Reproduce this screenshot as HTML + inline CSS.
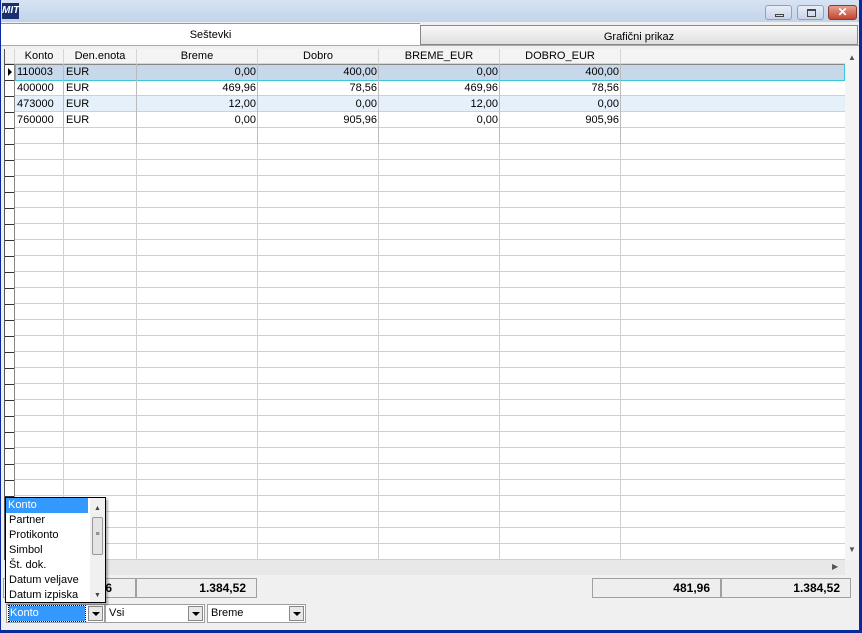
<!DOCTYPE html>
<html><head><meta charset="utf-8"><style>
*{margin:0;padding:0;box-sizing:border-box}
body{width:862px;height:633px;overflow:hidden;background:#0a2a9c;font-family:"Liberation Sans",sans-serif;font-size:11px;position:relative}
.win{position:absolute;left:1px;top:0;width:858px;height:630px;background:#f0f0f0}
.title{position:absolute;left:0;top:0;width:858px;height:22px;background:linear-gradient(#d6e3f3,#c3d4ea)}
.abs{position:absolute}
.tab{position:absolute;top:23px;height:22px;text-align:center;line-height:22px;font-size:11px;color:#000}
.grid{position:absolute;left:3px;top:49px;width:841px;height:511px;background:#fff;border-left:1px solid #555;overflow:hidden}
.rows{position:absolute;left:10px;top:15px;width:831px;height:500px;background:repeating-linear-gradient(#fff 0 15px,#d0d0d0 15px 16px)}
.vl{position:absolute;top:0;width:1px;height:511px;background:#d0d0d0}
.hdr{position:absolute;top:0;height:15px;line-height:15px;text-align:center;background:#f4f4f4;border-right:1px solid #d5d5d5;border-bottom:1px solid #d5d5d5}
.c{position:absolute;height:15px;line-height:15px;white-space:nowrap}
.r{text-align:right;padding-right:2px}
.tot{position:absolute;top:578px;height:20px;background:#eeeeee;border:1px solid #a0a0a0;font-weight:bold;font-size:12px;text-align:right;padding-right:10px;line-height:19px}
.combo{position:absolute;top:604px;height:19px;background:#fff;border:1px solid #a0a0a0;line-height:17px;padding-left:3px}
.btn{position:absolute;right:1px;top:1px;width:15px;height:15px;background:#e8e8e8;border:1px solid #888}
.btn:after{content:"";position:absolute;left:3px;top:5px;border-left:4px solid transparent;border-right:4px solid transparent;border-top:4px solid #000}
</style></head><body>
<div class="win">
<div class="title"></div>
<div class="abs" style="left:1px;top:3px;width:17px;height:16px;background:#1a2f6e;color:#fff;font-weight:bold;font-size:10px;line-height:16px;font-style:italic">MIT</div>
<div class="abs" style="left:764px;top:5px;width:27px;height:15px;border:1px solid #8ea2c0;border-radius:3px;background:linear-gradient(#e8eef8,#c8d4e8)"><div class="abs" style="left:9px;top:8px;width:9px;height:3px;border:1px solid #444"></div></div>
<div class="abs" style="left:796px;top:5px;width:27px;height:15px;border:1px solid #8ea2c0;border-radius:3px;background:linear-gradient(#e8eef8,#c8d4e8)"><div class="abs" style="left:9px;top:3px;width:9px;height:8px;border:1px solid #444;border-top-width:2px"></div></div>
<div class="abs" style="left:827px;top:5px;width:29px;height:15px;border:1px solid #8a3a2a;border-radius:3px;background:linear-gradient(#e8a090,#c04530);color:#fff;font-weight:bold;text-align:center;line-height:13px;font-size:12px">✕</div>
<div class="tab" style="left:0;width:419px;background:#fff;border-top:1px solid #999">Seštevki</div>
<div class="tab" style="left:419px;top:25px;height:20px;line-height:22px;width:438px;background:linear-gradient(#f8f8f8,#e0e0e0);border:1px solid #888">Grafični prikaz</div>
<div class="abs" style="left:0;top:45px;width:858px;height:1px;background:#aaa"></div>

<div class="grid">
<div class="rows"></div>
<div class="abs" style="left:0;top:0;width:10px;height:511px;background:repeating-linear-gradient(#fff 0 15px,#333 15px 16px);border-right:1px solid #888"></div>
<div class="vl" style="left:58px"></div><div class="vl" style="left:131px"></div><div class="vl" style="left:252px"></div><div class="vl" style="left:373px"></div><div class="vl" style="left:494px"></div><div class="vl" style="left:615px"></div>
<div class="hdr" style="left:0;width:10px"></div>
<div class="hdr" style="left:10px;width:49px">Konto</div>
<div class="hdr" style="left:59px;width:73px">Den.enota</div>
<div class="hdr" style="left:132px;width:121px">Breme</div>
<div class="hdr" style="left:253px;width:121px">Dobro</div>
<div class="hdr" style="left:374px;width:121px">BREME_EUR</div>
<div class="hdr" style="left:495px;width:121px">DOBRO_EUR</div>
<div class="hdr" style="left:616px;width:225px;border-right:none"></div>
<div class="abs" style="left:10px;top:15px;width:830px;height:17px;background:#c7d8ea;border:1px solid #3cc8d8;border-top-color:#888"></div>
<div class="abs" style="left:10px;top:47px;width:831px;height:15px;background:#e6f0fa"></div>
<div class="abs" style="left:3px;top:19px;border-top:4px solid transparent;border-bottom:4px solid transparent;border-left:4px solid #000"></div>
<div class="vl" style="left:58px;height:80px;top:15px;background:#bbb"></div>
<div class="vl" style="left:131px;height:80px;top:15px;background:#bbb"></div>
<div class="vl" style="left:252px;height:80px;top:15px;background:#bbb"></div>
<div class="vl" style="left:373px;height:80px;top:15px;background:#bbb"></div>
<div class="vl" style="left:494px;height:80px;top:15px;background:#bbb"></div>
<div class="vl" style="left:615px;height:80px;top:15px;background:#bbb"></div>
<div style="position:absolute;top:16px;left:0">
<div class="c" style="left:12px;top:0">110003</div><div class="c" style="left:61px;top:0">EUR</div><div class="c r" style="left:132px;width:121px;top:0">0,00</div><div class="c r" style="left:253px;width:121px;top:0">400,00</div><div class="c r" style="left:374px;width:121px;top:0">0,00</div><div class="c r" style="left:495px;width:121px;top:0">400,00</div>
<div class="c" style="left:12px;top:16px">400000</div><div class="c" style="left:61px;top:16px">EUR</div><div class="c r" style="left:132px;width:121px;top:16px">469,96</div><div class="c r" style="left:253px;width:121px;top:16px">78,56</div><div class="c r" style="left:374px;width:121px;top:16px">469,96</div><div class="c r" style="left:495px;width:121px;top:16px">78,56</div>
<div class="c" style="left:12px;top:32px">473000</div><div class="c" style="left:61px;top:32px">EUR</div><div class="c r" style="left:132px;width:121px;top:32px">12,00</div><div class="c r" style="left:253px;width:121px;top:32px">0,00</div><div class="c r" style="left:374px;width:121px;top:32px">12,00</div><div class="c r" style="left:495px;width:121px;top:32px">0,00</div>
<div class="c" style="left:12px;top:48px">760000</div><div class="c" style="left:61px;top:48px">EUR</div><div class="c r" style="left:132px;width:121px;top:48px">0,00</div><div class="c r" style="left:253px;width:121px;top:48px">905,96</div><div class="c r" style="left:374px;width:121px;top:48px">0,00</div><div class="c r" style="left:495px;width:121px;top:48px">905,96</div>
</div>
</div>
<div class="abs" style="left:844px;top:49px;width:14px;height:511px;background:#f4f4f4;font-size:8px;color:#555;text-align:center"><div style="position:absolute;top:4px;width:14px">▲</div><div style="position:absolute;top:496px;width:14px">▼</div></div>
<div class="abs" style="left:3px;top:560px;width:841px;height:15px;background:#e8e8e8;font-size:8px;color:#555"><div style="position:absolute;left:828px;top:2px">▶</div></div>

<div class="tot" style="left:2px;width:133px;padding-right:23px">481,96</div>
<div class="tot" style="left:135px;width:121px">1.384,52</div>
<div class="tot" style="left:591px;width:129px">481,96</div>
<div class="tot" style="left:720px;width:130px">1.384,52</div>

<div class="combo" style="left:5px;width:99px;padding-left:2px"><span style="display:inline-block;height:15px;line-height:15px;margin-top:1px;background:#3399ff;color:#fff;outline:1px dotted #000;width:76px;padding-left:1px">Konto</span><div class="btn"></div></div>
<div class="combo" style="left:104px;width:100px">Vsi<div class="btn"></div></div>
<div class="combo" style="left:206px;width:99px">Breme<div class="btn"></div></div>

<div class="abs" style="left:4px;top:497px;width:101px;height:106px;background:#fff;border:1px solid #000;box-shadow:2px 2px 2px rgba(0,0,0,.3);line-height:15px;font-size:11px">
<div style="background:#3399ff;color:#fff;width:82px;padding-left:2px">Konto</div>
<div style="padding-left:3px">Partner</div><div style="padding-left:3px">Protikonto</div><div style="padding-left:3px">Simbol</div><div style="padding-left:3px">Št. dok.</div><div style="padding-left:3px">Datum veljave</div><div style="padding-left:3px">Datum izpiska</div>
<div class="abs" style="left:84px;top:0;width:15px;height:104px;background:#f0f0f0;font-size:7px;color:#444;text-align:center"><div style="position:absolute;top:3px;width:15px">▲</div><div style="position:absolute;left:2px;top:19px;width:11px;height:38px;background:#e4e4e4;border:1px solid #999;border-radius:2px;line-height:34px">≡</div><div style="position:absolute;top:90px;width:15px">▼</div></div>
</div>
</div>
</body></html>
